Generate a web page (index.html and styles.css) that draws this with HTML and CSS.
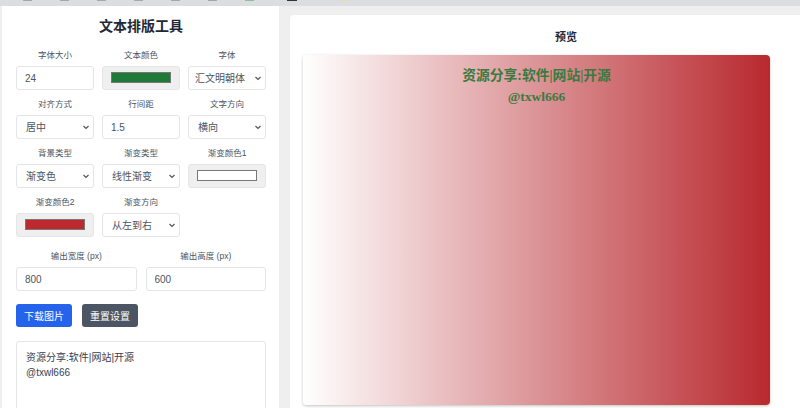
FILE: index.html
```html
<!DOCTYPE html>
<html lang="zh-CN">
<head>
    <meta charset="UTF-8">
    <meta name="viewport" content="width=device-width, initial-scale=1.0">
    <title>文本排版工具</title>
    <link rel="stylesheet" href="styles.css">
</head>
<body>
    <div class="toolbar">
        <span></span><span></span><span></span><span></span><span></span><span></span>
        <span class="green"></span><span class="dark"></span><span class="yellow"></span>
    </div>

    <div class="app">
        <aside class="panel controls">
            <h1 class="title">文本排版工具</h1>

            <div class="grid three">
                <div class="field">
                    <label for="fontSize">字体大小</label>
                    <input type="text" id="fontSize" value="24">
                </div>
                <div class="field">
                    <label for="textColor">文本颜色</label>
                    <input type="color" id="textColor" value="#1e7a36">
                </div>
                <div class="field">
                    <label for="fontFamily">字体</label>
                    <select id="fontFamily">
                        <option>汇文明朝体</option>
                    </select>
                </div>

                <div class="field">
                    <label for="align">对齐方式</label>
                    <select id="align">
                        <option>居中</option>
                    </select>
                </div>
                <div class="field">
                    <label for="lineHeight">行间距</label>
                    <input type="text" id="lineHeight" value="1.5">
                </div>
                <div class="field">
                    <label for="direction">文字方向</label>
                    <select id="direction">
                        <option>横向</option>
                    </select>
                </div>

                <div class="field">
                    <label for="bgType">背景类型</label>
                    <select id="bgType">
                        <option>渐变色</option>
                    </select>
                </div>
                <div class="field">
                    <label for="gradType">渐变类型</label>
                    <select id="gradType">
                        <option>线性渐变</option>
                    </select>
                </div>
                <div class="field">
                    <label for="gradColor1">渐变颜色1</label>
                    <input type="color" id="gradColor1" value="#ffffff">
                </div>

                <div class="field">
                    <label for="gradColor2">渐变颜色2</label>
                    <input type="color" id="gradColor2" value="#bd2a2e">
                </div>
                <div class="field">
                    <label for="gradDir">渐变方向</label>
                    <select id="gradDir">
                        <option>从左到右</option>
                    </select>
                </div>
            </div>

            <div class="grid two">
                <div class="field">
                    <label for="outW">输出宽度 (px)</label>
                    <input type="text" id="outW" value="800">
                </div>
                <div class="field">
                    <label for="outH">输出高度 (px)</label>
                    <input type="text" id="outH" value="600">
                </div>
            </div>

            <div class="actions">
                <button class="btn primary">下载图片</button>
                <button class="btn secondary">重置设置</button>
            </div>

            <textarea class="text-input">资源分享:软件|网站|开源
@txwl666</textarea>
        </aside>

        <section class="panel preview">
            <h2 class="preview-title">预览</h2>
            <div class="canvas">
                <p class="linha-cjk">资源分享:软件|网站|开源</p>
                <p>@txwl666</p>
            </div>
        </section>
    </div>
</body>
</html>
```

FILE: styles.css
```css
:root{
    --fundo: #efefef;
    --borda: #e3e5e9;
    --texto: #374151;
    --azul: #2563eb;
    --cinza: #4b5563;
}

body{
    margin: 0;
    background-color: var(--fundo);
    font-family: "Liberation Sans", "Noto Sans CJK SC", sans-serif;
    color: var(--texto);
    overflow: hidden;
    height: 408px;
}

.toolbar{
    height: 6px;
    background-color: #dcdde1;
    display: flex;
    gap: 28px;
    padding-left: 23px;
}

.toolbar span{
    width: 9px;
    height: 1px;
    background-color: #a4a7ad;
}

.toolbar .green{ background-color: #8fb9a0; margin-right: 5px; }
.toolbar .dark{ background-color: #333; width: 10px; margin-right: 17px; }
.toolbar .yellow{ background-color: #e8dcae; width: 7px; }

.app{
    display: flex;
    align-items: flex-start;
    gap: 11px;
    padding-left: 2px;
    height: 402px;
    overflow: hidden;
}

.panel{
    background-color: #fff;
    box-sizing: border-box;
    flex-shrink: 0;
}

.controls{
    width: 277px;
    height: 420px;
    padding: 10px 13px 0 14px;
}

.title{
    margin: 0 0 13px;
    font-size: 14px;
    line-height: 20px;
    font-weight: bold;
    text-align: center;
    color: #1f2937;
}

.grid{
    display: grid;
    row-gap: 8px;
}

.grid.three{
    grid-template-columns: repeat(3, 78px);
    column-gap: 8px;
}

.grid.two{
    grid-template-columns: 1fr 1fr;
    column-gap: 9px;
    margin-top: 13px;
}

.field label{
    display: block;
    text-align: center;
    font-size: 8.5px;
    line-height: 12px;
    margin-bottom: 5px;
    color: #4b5563;
}

input[type="text"], select{
    width: 100%;
    height: 24px;
    box-sizing: border-box;
    border: 1px solid var(--borda);
    border-radius: 3px;
    background-color: #fff;
    font-family: inherit;
    font-size: 10px;
    color: #4b5563;
    padding: 0 0 0 8px;
    outline: none;
}

select{
    appearance: none;
    -webkit-appearance: none;
    padding: 0 14px 0 9px;
    background-image: url("data:image/svg+xml,%3Csvg xmlns='http://www.w3.org/2000/svg' width='8' height='8' viewBox='0 0 8 8'%3E%3Cpath d='M1.5 3l2.5 2.5L6.5 3' fill='none' stroke='%23555' stroke-width='1.2'/%3E%3C/svg%3E");
    background-repeat: no-repeat;
    background-position: right 3px center;
    background-size: 8px 8px;
}

#fontFamily{
    padding-left: 6px;
}

input[type="color"]{
    display: block;
    width: 100%;
    height: 24px;
    box-sizing: border-box;
    padding: 0;
    border: 1px solid var(--borda);
    border-radius: 3px;
    background-color: #efefef;
    cursor: pointer;
}

input[type="color"]::-webkit-color-swatch-wrapper{
    padding: 5px 8px 6px;
}

input[type="color"]::-webkit-color-swatch{
    border: 1px solid #777;
    border-radius: 0;
}

.actions{
    display: flex;
    gap: 10px;
    margin-top: 13px;
}

.btn{
    height: 23px;
    padding: 0 8px;
    border: none;
    border-radius: 3px;
    font-family: inherit;
    font-size: 10px;
    color: #fff;
    cursor: pointer;
}

.btn.primary{ background-color: var(--azul); }
.btn.secondary{ background-color: var(--cinza); }

.text-input{
    display: block;
    width: 100%;
    height: 90px;
    box-sizing: border-box;
    margin-top: 14px;
    padding: 8px 9px;
    border: 1px solid var(--borda);
    border-radius: 3px;
    font-family: inherit;
    font-size: 10px;
    line-height: 15px;
    color: #374151;
    resize: none;
}

.preview{
    margin-top: 9px;
    width: 552px;
    height: 420px;
    padding: 14px 13px;
    border-radius: 4px;
}

.preview-title{
    margin: 0 0 10px;
    font-size: 11px;
    line-height: 16px;
    font-weight: bold;
    text-align: center;
    color: #1f2937;
}

.canvas{
    width: 467px;
    height: 350px;
    box-sizing: border-box;
    padding-top: 10px;
    border-radius: 4px;
    background: linear-gradient(to right, #ffffff, #b8292e);
    box-shadow: 0 1px 3px rgba(0, 0, 0, 0.25);
    text-align: center;
    font-family: "Liberation Serif", "Noto Sans CJK SC", serif;
    font-size: 13.5px;
    line-height: 21px;
    font-weight: bold;
    color: #3a7a40;
}

.canvas p{
    margin: 0;
}

.canvas .linha-cjk{
    font-size: 13.8px;
}
```
